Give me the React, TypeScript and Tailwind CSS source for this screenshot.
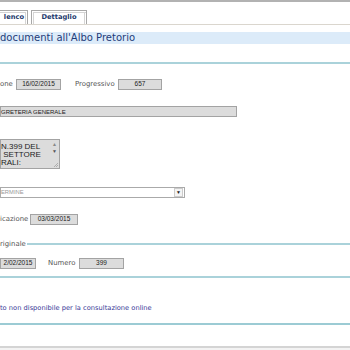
import React from 'react';

const Box = ({ className, children }: { className: string; children?: React.ReactNode }) => (
    <div className={`h-[11px] bg-[#dcdcdc] border border-[#a3a3a3] flex items-center text-[6.5px] text-[#222] leading-none ${className}`}>
        {children}
    </div>
);

const Label = ({ className, children }: { className?: string; children: React.ReactNode }) => (
    <span className={`text-[6.9px] text-[#555] leading-none font-['DejaVu_Sans',sans-serif] ${className ?? ''}`}>{children}</span>
);

const App = () => {
    return (
        <div className="w-[350px] h-[350px] overflow-hidden bg-white font-['Liberation_Sans',Arial,sans-serif]">
            <div className="h-[2px] bg-[#b2b2b2]" />

            {/* tabs */}
            <div className="mt-[9px] h-[14px] flex items-end gap-[3px] border-b border-[#dad6ce]">
                <div className="w-[28px] h-[14px] border border-l-0 border-b-0 border-[#a8a8a8] shadow-[inset_-1px_1px_0_#fff,inset_-2px_2px_0_#d4d4d4] flex items-center justify-end pr-[3px]">
                    <span className="text-[6.7px] font-bold text-[#1d3a6c] font-['DejaVu_Sans',sans-serif] leading-none">lenco</span>
                </div>
                <div className="w-[56px] h-[14px] border border-b-0 border-[#a8a8a8] shadow-[inset_1px_1px_0_#fff,inset_2px_2px_0_#d4d4d4,inset_-1px_0_0_#fff,inset_-2px_0_0_#d4d4d4] bg-white flex items-center justify-center">
                    <span className="text-[6.7px] font-bold text-[#1d3a6c] font-['DejaVu_Sans',sans-serif] leading-none">Dettaglio</span>
                </div>
            </div>

            {/* title */}
            <div className="mt-[7px] h-[12px] bg-[#dcebf9] flex items-center">
                <span className="text-[10px] text-[#1f3d7a] font-['DejaVu_Sans',sans-serif] leading-none">documenti all'Albo Pretorio</span>
            </div>

            <div className="mt-[18px] h-[2px] bg-[#aad2da]" />

            {/* data registrazione / progressivo */}
            <div className="mt-[15px] flex items-center">
                <Label className="w-[16px]">one</Label>
                <Box className="w-[45px] justify-center">16/02/2015</Box>
                <Label className="ml-[14px] w-[43px]">Progressivo</Label>
                <Box className="w-[44px] justify-center">657</Box>
            </div>

            {/* ufficio */}
            <div className="mt-[16px]">
                <Box className="w-[237px] text-[6px]">GRETERIA GENERALE</Box>
            </div>

            {/* oggetto */}
            <div className="mt-[22px] w-[60px] h-[30px] bg-[#dcdcdc] border border-[#a3a3a3] flex">
                <div className="flex-1 pt-[3px] text-[8px] leading-[8px] text-[#222] whitespace-pre overflow-hidden">
                    {'N.399 DEL\n SETTORE\nRALI:'}
                </div>
                <div className="w-[9px] flex flex-col items-center justify-between text-[#888] text-[5px] leading-none pt-[2px]">
                    <div className="flex flex-col items-center gap-[2px]">
                        <span>▲</span>
                        <span className="text-[#555]">▼</span>
                    </div>
                    <svg width="7" height="7" viewBox="0 0 7 7" className="self-end">
                        <path d="M6 2 L2 6 M6 4 L4 6" stroke="#999" strokeWidth="0.7" />
                    </svg>
                </div>
            </div>

            {/* tipo */}
            <div className="mt-[18px] w-[185px] h-[11px] border border-[#aaa] bg-white flex items-center">
                <span className="flex-1 text-[5.8px] text-[#999] leading-none">ERMINE</span>
                <div className="w-[9px] h-[9px] mr-[1px] border border-[#ccc] bg-[#f4f4f4] flex items-center justify-center">
                    <span className="text-[5px] leading-none text-[#222]">▼</span>
                </div>
            </div>

            {/* pubblicazione */}
            <div className="mt-[16px] flex items-center">
                <Label className="w-[30px]">icazione</Label>
                <Box className="w-[48px] justify-center">03/03/2015</Box>
            </div>

            {/* atto originale */}
            <div className="mt-[15px] h-[8px] flex items-center">
                <Label className="pr-[1px]">riginale</Label>
                <div className="flex-1 h-[2px] bg-[#aad2da]" />
            </div>
            <div className="mt-[10px] flex items-center">
                <Box className="w-[36px] justify-center">2/02/2015</Box>
                <Label className="ml-[12px] w-[31px]">Numero</Label>
                <Box className="w-[45px] justify-center">399</Box>
            </div>
            <div className="mt-[7px] h-[2px] bg-[#aad2da]" />

            {/* nota */}
            <div className="mt-[26px] h-[8px] flex items-center">
                <span className="text-[6.7px] text-[#3a3a98] font-['DejaVu_Sans',sans-serif] leading-none">to non disponibile per la consultazione online</span>
            </div>

            <div className="mt-[11px] h-[2px] bg-[#9ccbd4]" />

            <div className="mt-[21px] h-[2px] bg-[#d4d4d4]" />
            <div className="h-[10px] bg-[#f3f3f3]" />
        </div>
    );
};

export default App;
